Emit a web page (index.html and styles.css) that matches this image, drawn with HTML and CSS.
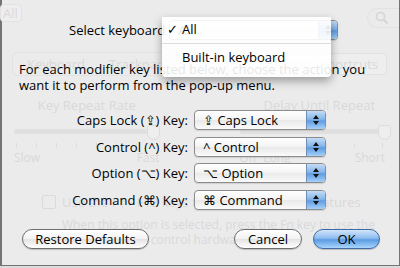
FILE: index.html
```html
<!DOCTYPE html>
<html lang="en">
<head>
  <meta charset="UTF-8">
  <title>Modifier Keys</title>
  <link rel="stylesheet" href="styles.css">
</head>
<body>

  <div class="window">

    <!-- the preference pane behind the sheet, seen through it -->
    <div class="backdrop">
      <div class="toolbar">
        <div class="ghost-btn show-all">All</div>
        <div class="ghost-search">
          <svg width="14" height="14" viewBox="0 0 14 14"><circle cx="5.5" cy="5.5" r="4" fill="none" stroke="#d6d6d6" stroke-width="1.6"/><path d="M8.5 8.5 L12.5 12.5" stroke="#d6d6d6" stroke-width="2"/></svg>
        </div>
      </div>
      <div class="tabs-row">
        <div class="ghost-tabs"><span>Keyboard</span><span>Trackpad</span></div>
        <div class="ghost-btn shortcuts">Keyboard Shortcuts</div>
      </div>
      <div class="sliders">
        <div class="slider">
          <div class="slider-title">Key Repeat Rate</div>
          <div class="track"><span class="knob knob-rate"></span></div>
          <div class="ticks"><i></i><i></i><i></i><i></i><i></i><i></i><i></i><i></i></div>
          <div class="slider-labels"><span>Slow</span><span>Fast</span></div>
        </div>
        <div class="slider">
          <div class="slider-title">Delay Until Repeat</div>
          <div class="track"><span class="knob knob-delay"></span></div>
          <div class="ticks"><i></i><i></i><i></i><i></i><i></i><i></i></div>
          <div class="slider-labels"><span>Off&nbsp;&nbsp;Long</span><span>Short</span></div>
        </div>
      </div>
      <div class="ghost-check"><span class="box"></span>Use the F1 - F12 keys to control software features</div>
      <div class="ghost-note">When this option is selected, press the Fn key to use the<br>F1 - F12 keys to control hardware features.</div>
    </div>

    <!-- the sheet -->
    <div class="sheet">
      <div class="select-row">
        <span class="select-label">Select keyboard</span>
        <div class="popup wide"><span class="popup-text">All</span><span class="arrows"><b class="up"></b><b class="down"></b></span></div>
      </div>

      <p class="intro">For each modifier key listed below, choose the action you<br>want it to perform from the pop-up menu.</p>

      <div class="keys">
        <label>Caps Lock (⇪) Key:</label>
        <div class="popup"><span class="popup-text">⇪ Caps Lock</span><span class="arrows"><b class="up"></b><b class="down"></b></span></div>
        <label>Control (^) Key:</label>
        <div class="popup"><span class="popup-text">^ Control</span><span class="arrows"><b class="up"></b><b class="down"></b></span></div>
        <label>Option (⌥) Key:</label>
        <div class="popup"><span class="popup-text">⌥ Option</span><span class="arrows"><b class="up"></b><b class="down"></b></span></div>
        <label>Command (⌘) Key:</label>
        <div class="popup"><span class="popup-text">⌘ Command</span><span class="arrows"><b class="up"></b><b class="down"></b></span></div>
      </div>

      <div class="buttons">
        <button class="btn restore">Restore Defaults</button>
        <div class="right-btns">
          <button class="btn cancel">Cancel</button>
          <button class="btn ok">OK</button>
        </div>
      </div>
    </div>

    <!-- open pop-up menu -->
    <div class="menu">
      <div class="menu-item"><span class="check">✓</span>All</div>
      <div class="menu-sep"></div>
      <div class="menu-item">Built-in keyboard</div>
    </div>

  </div>

</body>
</html>
```

FILE: styles.css
```css
* { box-sizing: border-box; }
body { margin: 0; width: 400px; height: 268px; overflow: hidden; background: #dcdcdc; font-family: "Open Sans", "Liberation Sans", sans-serif; font-size: 13px; color: #000; }

.window { position: relative; width: 400px; height: 266px; background: #ebebeb; border-left: 2px solid #747474; border-right: 1px solid #747474; border-bottom: 1px solid #747474; }

/* faded pane behind the sheet */
.backdrop { position: absolute; inset: 0; color: #d9d9d9; padding: 4px 0 0 0; }
.toolbar { display: flex; justify-content: space-between; height: 48px; }
.ghost-btn { border: 1px solid #e2e2e2; border-radius: 4px; background: #eeeeee; }
.show-all { width: 22px; height: 18px; padding-left: 2px; line-height: 16px; margin-left: -2px; }
.ghost-search { width: 32px; height: 20px; margin-top: 4px; border: 1px solid #e2e2e2; border-right: none; border-radius: 10px 0 0 10px; padding: 2px 0 0 7px; }
.tabs-row { display: flex; justify-content: space-between; align-items: center; height: 24px; }
.ghost-tabs { display: flex; gap: 24px; margin-left: 10px; padding: 2px 14px; border: 1px solid #e3e3e3; border-radius: 4px; }
.shortcuts { padding: 1px 8px; margin-right: 12px; }
.sliders { display: grid; grid-template-columns: 1fr 1fr; gap: 80px; padding: 20px 14px 0 12px; }
.slider-title { text-align: center; }
.slider:last-child .slider-title { padding-left: 14px; }
.track { position: relative; height: 5px; margin-top: 15px; border-radius: 3px; background: #e0e0e0; }
.knob { position: absolute; top: -4px; width: 13px; height: 15px; border: 1px solid #dcdcdc; border-radius: 3px 3px 7px 7px; background: #eeeeee; }
.knob-rate { right: 0; }
.knob-delay { right: -6px; }
.ticks { display: flex; justify-content: space-between; padding: 9px 2px 0; }
.ticks i { width: 1px; height: 5px; background: #dddddd; }
.slider-labels { display: flex; justify-content: space-between; font-size: 12px; margin-top: 1px; }
.ghost-check { display: flex; align-items: center; gap: 6px; margin: 27px 0 0 40px; }
.ghost-check .box { width: 14px; height: 14px; border: 1px solid #dadada; border-radius: 2px; }
.ghost-note { margin: 6px 0 0 60px; font-size: 12px; line-height: 15px; }

/* sheet */
.sheet { position: relative; display: flex; flex-direction: column; height: 100%; padding: 20px 0 0 17px; }
.select-row { display: flex; align-items: center; gap: 4px; padding-left: 50px; }
.intro { margin: 21px 0 0; line-height: 16px; }
.keys { display: grid; grid-template-columns: 169px 132px; column-gap: 6px; row-gap: 6.7px; margin-top: 17px; align-items: center; }
.keys label { text-align: right; }

.popup { display: flex; height: 20px; border: 1px solid #8c8c8c; border-radius: 4px; background: linear-gradient(#ffffff, #f3f3f3 50%, #e9e9e9 51%, #fafafa); box-shadow: 0 1px 1px rgba(0, 0, 0, 0.12); overflow: hidden; }
.popup.wide { width: 169px; }
.popup-text { flex: 1; padding-left: 8px; line-height: 18px; white-space: nowrap; }
.arrows { display: flex; flex-direction: column; align-items: center; justify-content: center; gap: 2px; width: 19px; border-left: 1px solid #6f8fb8; background: linear-gradient(#c3dcf5, #86b6ea 45%, #5f9de2 55%, #a5d0fa); }
.arrows b { width: 0; height: 0; border-left: 3px solid transparent; border-right: 3px solid transparent; }
.arrows .up { border-bottom: 4px solid #111; }
.arrows .down { border-top: 4px solid #111; }

.buttons { display: flex; justify-content: space-between; align-items: center; margin-top: 19px; padding: 0 19px 0 3px; }
.right-btns { display: flex; gap: 11px; }
.btn { height: 20px; padding: 0; font: inherit; border: 1px solid #6e6e6e; border-radius: 10px; background: linear-gradient(#ffffff, #f2f2f2 50%, #e3e3e3 51%, #ffffff); box-shadow: 0 1px 1px rgba(0, 0, 0, 0.2); color: #000; }
.restore { width: 127px; }
.cancel { width: 68px; }
.ok { width: 67px; border-color: #3f6aa3; background: linear-gradient(#d2e5f9, #8fbdf0 45%, #5c9be3 55%, #a8d6fd); }

/* open menu */
.menu { position: absolute; left: 160px; top: 17px; width: 169px; height: 60px; background: rgba(255, 255, 255, 0.9); box-shadow: 0 4px 10px rgba(0, 0, 0, 0.35); border-radius: 0 0 4px 4px; padding-top: 4px; }
.menu-item { position: relative; height: 17px; line-height: 17px; padding-left: 20px; }
.check { position: absolute; left: 5px; }
.menu-sep { height: 1px; margin: 5px 0 5px; background: #dcdcdc; }
```
